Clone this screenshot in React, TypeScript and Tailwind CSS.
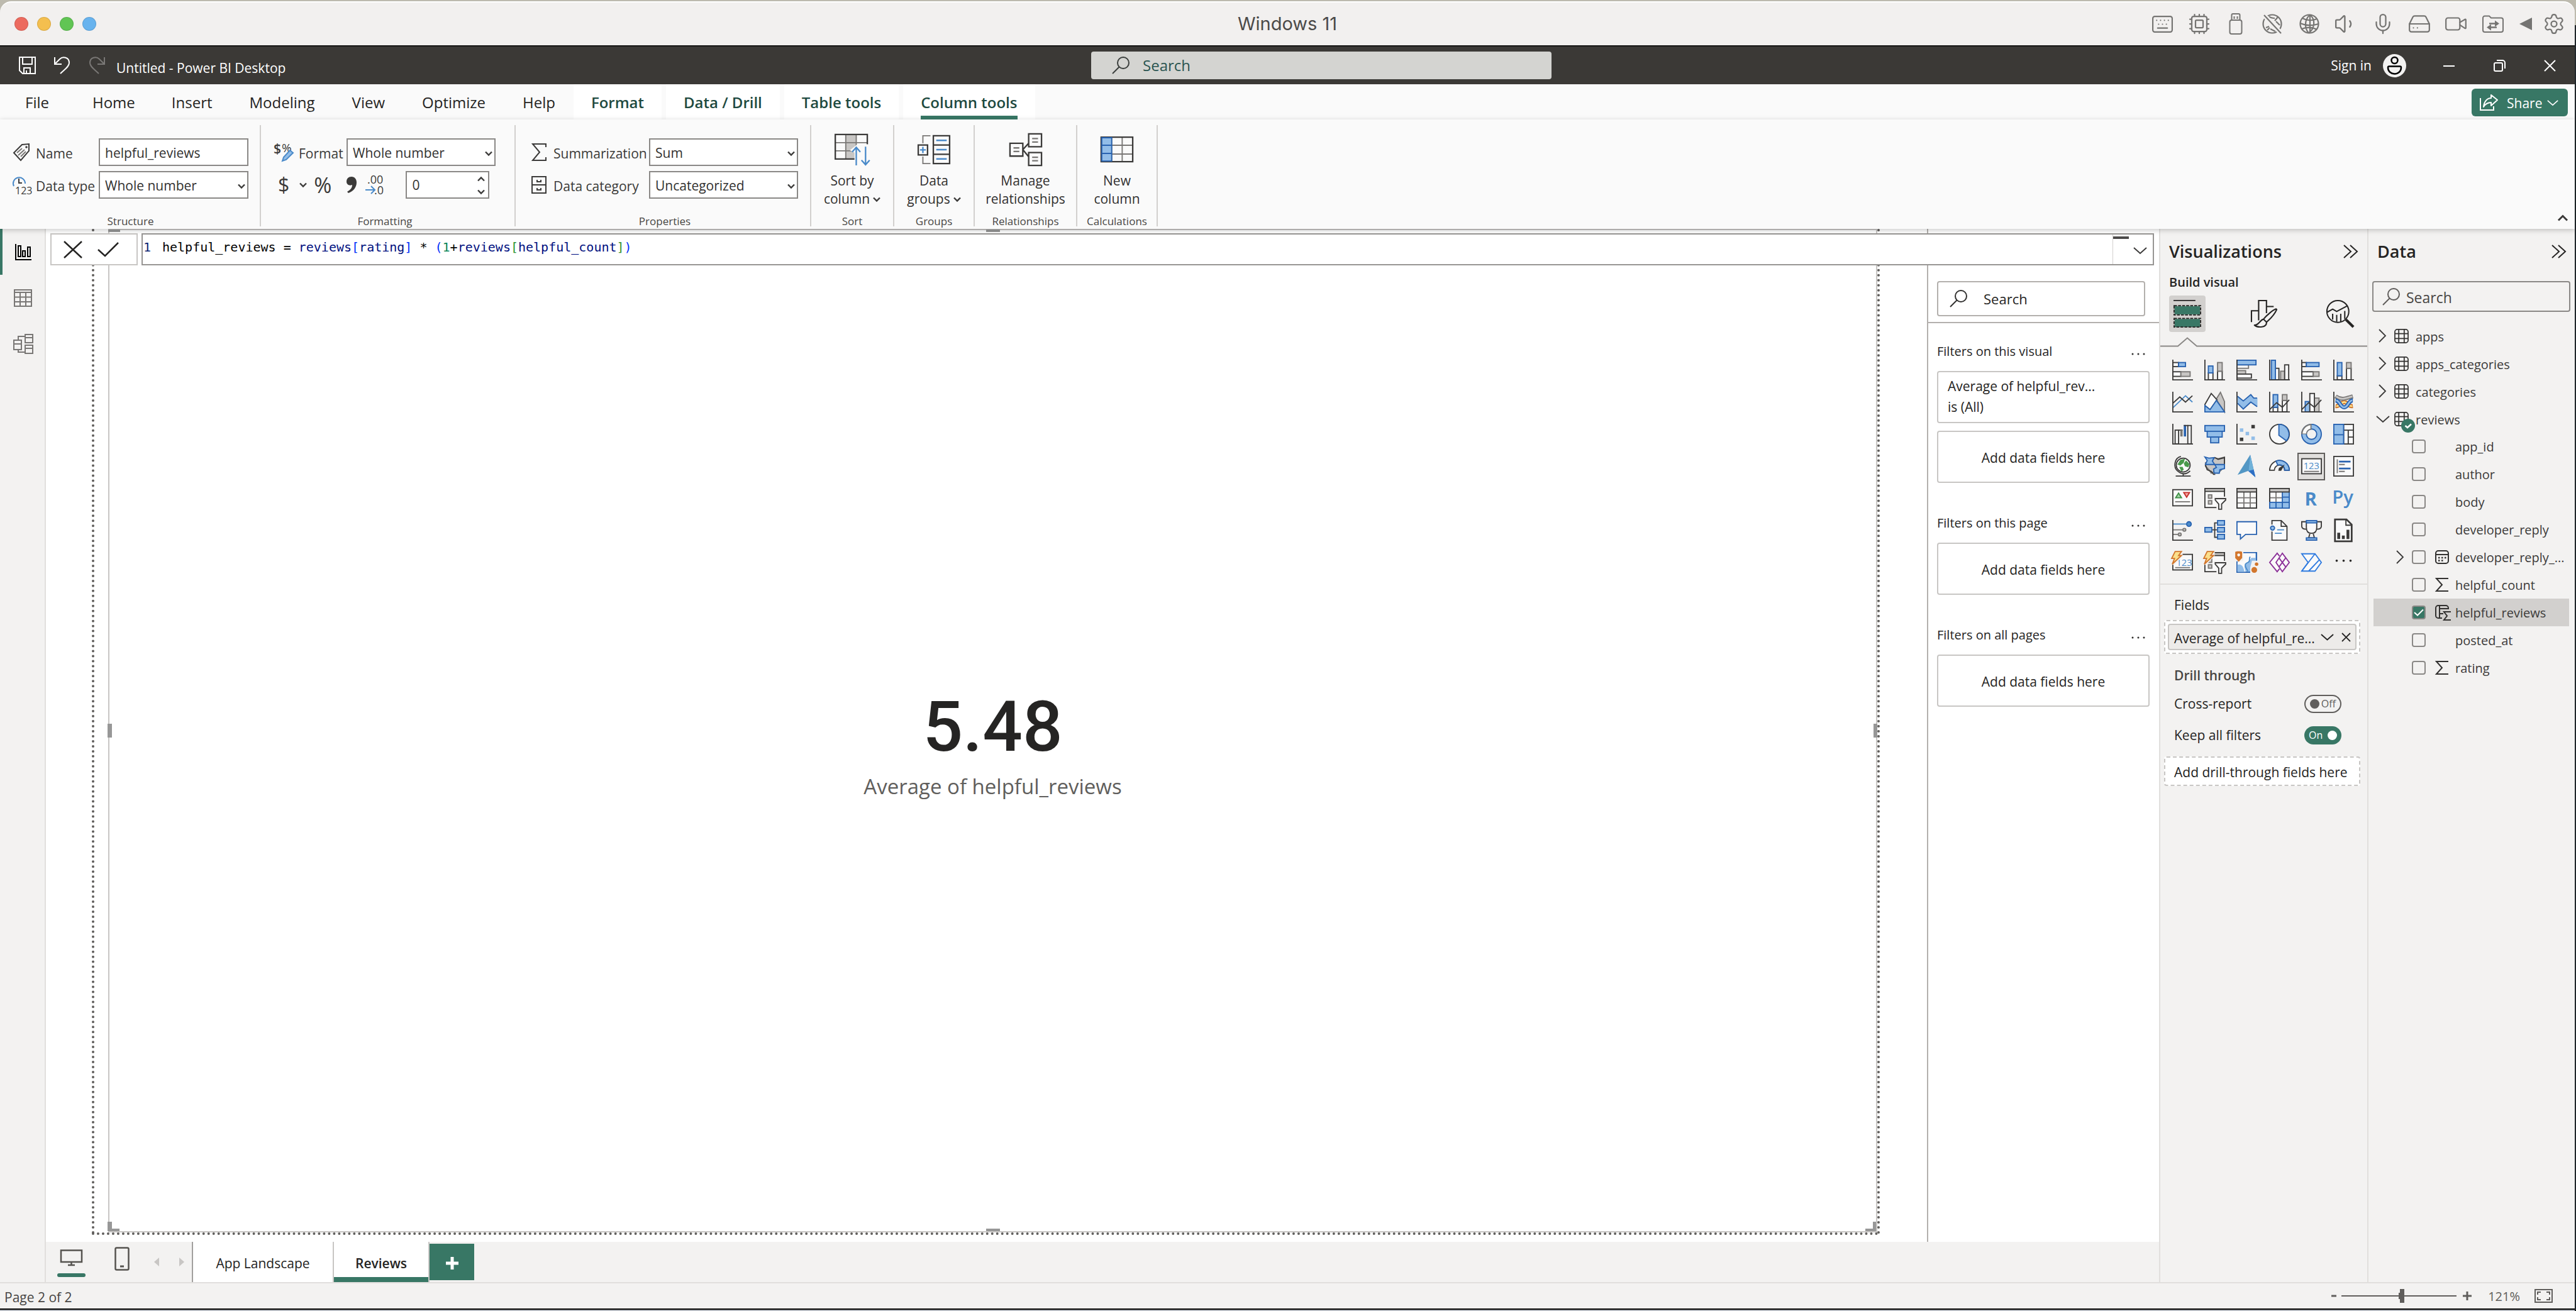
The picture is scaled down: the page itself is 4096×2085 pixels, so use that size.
import React from 'react';
import { Keyboard, Cpu, Volume1, Mic, HardDrive, Video, Settings } from 'lucide-react';

const D = '#3b3a39';
const G = '#797775';
const LG = '#c8c6c4';
const B = '#2862b0';
const LB = '#92bde8';
const W = '#fafafa';
const MB = '#4a8ac9';
const OR = '#d2762c';

type SvgProps = { w?: number; h?: number; vb?: string; className?: string; children: React.ReactNode };
const Svg = ({ w = 33, h = 33, vb = '0 0 36 36', className = '', children }: SvgProps) => (
  <svg width={w} height={h} viewBox={vb} fill="none" className={`shrink-0 overflow-visible ${className}`} aria-hidden="true">
    {children}
  </svg>
);

const ChevronDown = ({ w = 22, sw = 2, className = '' }: { w?: number; sw?: number; className?: string }) => (
  <Svg w={w} h={w / 2} vb="0 0 22 11" className={className}>
    <path d="M1 1L11 10L21 1" stroke="currentColor" strokeWidth={sw} />
  </Svg>
);
const ChevronRight = () => (
  <Svg w={12} h={22} vb="0 0 12 22">
    <path d="M1 1L11 11L1 21" stroke="currentColor" strokeWidth="1.800" />
  </Svg>
);
const Caret = ({ className = '' }: { className?: string }) => (
  <Svg w={12} h={8} vb="0 0 12 8" className={className}>
    <path d="M1 1.5L6 6.5L11 1.5" stroke={D} strokeWidth="2.4" />
  </Svg>
);
const DoubleChevron = () => (
  <Svg w={24} h={22} vb="0 0 24 22">
    <path d="M1 1L12 11L1 21M11 1L22 11L11 21" stroke="#252423" strokeWidth="2" />
  </Svg>
);
const SearchIcon = ({ color = '#323130' }: { color?: string }) => (
  <Svg w={28} h={28} vb="0 0 28 28">
    <circle cx="18" cy="10" r="9" stroke={color} strokeWidth="2" />
    <path d="M11.500 16.500L1 27" stroke={color} strokeWidth="2" />
  </Svg>
);

/* ---------- host window title bar ---------- */

const UsbStick = () => (
  <Svg w={22} h={34} vb="0 0 22 34">
    <rect x="1.500" y="11" width="19" height="22" rx="3" stroke="currentColor" strokeWidth="2" />
    <path d="M4.500 11V3a2 2 0 012-2h9a2 2 0 012 2v8M8.500 5v4M13.500 5v4" stroke="currentColor" strokeWidth="2" />
  </Svg>
);
const Globe = () => (
  <Svg w={32} h={32} vb="0 0 32 32">
    <g stroke="currentColor" strokeWidth="2.200">
      <circle cx="16" cy="16" r="14.500" />
      <path d="M17 1.500C8 9 8 23 15 30.500M17 1.500c9 7.500 8 21.500-2 29M17 1.500v29M1.500 15c9 4 20 4 29 1M5 7c7 4 16 4 23 1M4 24c7-3 17-3 24 1" />
    </g>
  </Svg>
);
const GlobeOff = () => (
  <Svg w={32} h={32} vb="0 0 32 32">
    <g stroke="currentColor" strokeWidth="2.200">
      <circle cx="16" cy="16" r="14.500" />
      <path d="M11 4c2 2 5 3 9 3M25 5l-5 6M21 28l-8-4M6 22l5-2M8 26l4-4M22 12l6 6" />
    </g>
    <path d="M2 1L30 31" stroke="#f2f0ef" strokeWidth="7" />
    <path d="M3 2L30 31" stroke="currentColor" strokeWidth="2.200" />
  </Svg>
);
const FolderArrows = () => (
  <Svg w={34} h={28} vb="0 0 34 28">
    <path d="M1 5a3 3 0 013-3.500h7l3 3h16a3 3 0 013 3V24a3 3 0 01-3 3H4a3 3 0 01-3-3Z" stroke="currentColor" strokeWidth="2" />
    <path d="M11 13.500h10M13 19.500h10" stroke="currentColor" strokeWidth="2.500" />
    <path d="M20 8.500l7 5-7 5ZM14 14.500l-7 5 7 5Z" fill="currentColor" />
  </Svg>
);

const hostIcons: [string, React.ReactNode][] = [
  ['Keyboard', <Keyboard size={37} strokeWidth={1.4} />],
  ['Processor', <Cpu size={36} strokeWidth={1.5} />],
  ['USB', <UsbStick />],
  ['Network off', <GlobeOff />],
  ['Network', <Globe />],
  ['Sound', <Volume1 size={38} strokeWidth={1.5} />],
  ['Microphone', <Mic size={36} strokeWidth={1.5} />],
  ['Hard disk', <HardDrive size={38} strokeWidth={1.4} />],
  ['Camera', <Video size={38} strokeWidth={1.4} />],
  ['Shared folders', <FolderArrows />],
];

function HostBar() {
  return (
    <header className="grid h-[70px] shrink-0 grid-cols-[1fr_auto_1fr] items-center rounded-t-[18px] border-t-2 border-white bg-[#f2f0ef]">
      <div className="flex items-center gap-[14px] pl-[23px]">
        {[['Close', 'bg-[#ec6b5f]'], ['Minimize', 'bg-[#f4bf4f]'], ['Zoom', 'bg-[#61c554]'], ['Coherence', 'bg-[#68b3ee]']].map(([n, c]) => (
          <button key={n} aria-label={n} className={`size-[22px] rounded-full border border-black/10 ${c}`} />
        ))}
      </div>
      <h1 className="font-[Inter,sans-serif] text-[29px] leading-8 text-[#4b4a49]">Windows 11</h1>
      <div className="flex items-center justify-end pr-[10px] text-[#757472]">
        <div className="flex w-[584px]">
          {hostIcons.map(([n, icon]) => (
            <button key={n} aria-label={n} className="flex flex-1 items-center justify-center">{icon}</button>
          ))}
        </div>
        <button aria-label="Collapse" className="flex w-[45px] justify-center">
          <Svg w={22} h={20} vb="0 0 22 20"><path d="M21 0V20L1 10Z" fill="currentColor" /></Svg>
        </button>
        <button aria-label="Settings" className="flex w-[46px] justify-center"><Settings size={36} strokeWidth={1.5} /></button>
      </div>
    </header>
  );
}

/* ---------- application title bar ---------- */

function AppBar() {
  return (
    <header className="grid h-[62px] shrink-0 grid-cols-[1735fr_732fr_1627fr] items-center border-t-2 border-[#161514] bg-[#3b3936] text-white">
      <div className="flex items-center pl-[30px]">
        <button aria-label="Save">
          <Svg w={27} h={28} vb="0 0 27 28">
            <path d="M1 1H26V27H6L1 22ZM6 1V12H21V1M8 27V18H18V27M12 27V22" stroke="white" strokeWidth="2" />
          </Svg>
        </button>
        <button aria-label="Undo" className="ml-[29px]">
          <Svg w={25} h={28} vb="0 0 25 28">
            <path d="M1 1V12H12M1 12L9 4C14 -1 24 1 24 10C24 16 17 20 10 27" stroke="white" strokeWidth="2" />
          </Svg>
        </button>
        <button aria-label="Redo" className="ml-[31px]">
          <Svg w={25} h={28} vb="0 0 25 28">
            <path d="M24 1V12H13M24 12L16 4C11 -1 1 1 1 10C1 16 8 20 15 27" stroke="#7a7876" strokeWidth="2" />
          </Svg>
        </button>
        <span className="ml-[18px] pt-[8px] text-[21px] leading-7">Untitled - Power BI Desktop</span>
      </div>
      <label className="flex h-[44px] items-center rounded-[4px] bg-[#d4d4d1] pl-[33px]">
        <SearchIcon color="#3b3f3d" />
        <input type="text" aria-label="Search" placeholder="Search" className="ml-[21px] min-w-0 flex-1 bg-transparent text-[24px] leading-8 outline-none placeholder:text-[#2a5450]" />
      </label>
      <div className="flex items-center justify-end">
        <button className="flex items-center gap-[18px] text-[21px] leading-7">
          Sign in
          <Svg w={37} h={37} vb="0 0 37 37">
            <circle cx="18.500" cy="18.500" r="18.500" fill="#f3f2f1" />
            <circle cx="18.500" cy="10" r="5" stroke="black" strokeWidth="2.500" />
            <path d="M10 19.500H27a2 2 0 012 2c0 6-5 10-10.500 10S8 27.500 8 21.500a2 2 0 012-2Z" stroke="black" strokeWidth="2.500" />
          </Svg>
        </button>
        <button aria-label="Minimize" className="ml-[28px] flex w-[80px] justify-center">
          <Svg w={18} h={18} vb="0 0 18 18"><path d="M0 10H18" stroke="white" strokeWidth="2" /></Svg>
        </button>
        <button aria-label="Restore" className="flex w-[80px] justify-center">
          <Svg w={19} h={19} vb="0 0 19 19">
            <rect x="1" y="5" width="13" height="13" rx="2" stroke="white" strokeWidth="2" />
            <path d="M5 1H14a4 4 0 014 4V14" stroke="white" strokeWidth="2" />
          </Svg>
        </button>
        <button aria-label="Close" className="flex w-[80px] justify-center">
          <Svg w={19} h={19} vb="0 0 19 19"><path d="M1 1L18 18M18 1L1 18" stroke="white" strokeWidth="2" /></Svg>
        </button>
      </div>
    </header>
  );
}

/* ---------- ribbon ---------- */

function RibbonTabs() {
  return (
    <nav className="flex h-[56px] shrink-0 items-stretch bg-[#fafafa] text-[24px] leading-8 text-[#252423]">
      <button className="pt-[2px] pr-[40px] pl-[40px]">File</button>
      {['Home', 'Insert'].map((t) => (
        <button key={t} className="px-[29px] pt-[2px]">{t}</button>
      ))}
      {['Modeling', 'View', 'Optimize', 'Help'].map((t) => (
        <button key={t} className="pt-[2px] pr-[29px] pl-[30px]">{t}</button>
      ))}
      <div className="flex gap-[7px] font-semibold text-[#1e4a40]">
        {['Format', 'Data / Drill', 'Table tools'].map((t) => (
          <button key={t} className="bg-white px-[28px] pt-[2px]">{t}</button>
        ))}
        <button aria-current="page" className="flex flex-col bg-white px-[28px]">
          <span className="flex flex-1 items-center pt-[8px]">Column tools</span>
          <span className="h-[6px] w-full bg-[#387765]" />
        </button>
      </div>
      <button className="mt-[7px] mr-[11px] ml-auto flex h-[44px] w-[153px] items-center rounded-[6px] bg-[#387765] pl-[13px] text-[21px] leading-7 text-white">
        <Svg w={29} h={26} vb="0 0 29 26">
          <path d="M1 6V25H22V19" stroke="white" strokeWidth="2" />
          <path d="M18 1L28 9L18 18V13C13 13 9 15 6 20C7 11 12 6 18 6Z" stroke="white" strokeWidth="2" strokeLinejoin="round" />
        </Svg>
        <span className="mr-[8px] ml-[14px] pt-[2px]">Share</span>
        <ChevronDown w={18} />
      </button>
    </nav>
  );
}

const Group = ({ label, className, children }: { label: string; className: string; children: React.ReactNode }) => (
  <section aria-label={label} className={`flex flex-col justify-between border-r-2 border-[#d2d0ce] ${className}`}>
    {children}
    <div className="text-center text-[17px] leading-4 text-[#484644]">{label}</div>
  </section>
);

const Picker = ({ id, value, className = 'w-[237px]' }: { id: string; value: string; className?: string }) => (
  <div className={`relative ${className}`}>
    <select id={id} defaultValue={value} className="h-[44px] w-full appearance-none border-2 border-[#8a8886] bg-white pt-[2px] pl-[8px] text-[21px] leading-7 text-[#323130] outline-none">
      <option>{value}</option>
    </select>
    <Caret className="pointer-events-none absolute top-[20px] right-[5px]" />
  </div>
);

const BigButton = ({ icon, lines, caret }: { icon: React.ReactNode; lines: string[]; caret?: boolean }) => (
  <button className="flex flex-col items-center pt-[12px] text-[21px] leading-[29px] text-[#323130]">
    <span className="flex h-[54px] items-center">{icon}</span>
    <span className="pt-[8px]">{lines[0]}</span>
    <span className="flex items-center gap-[5px]">
      {lines[1]}
      {caret && <Caret />}
    </span>
  </button>
);

function Ribbon() {
  return (
    <div className="relative z-20 flex h-[174px] shrink-0 bg-[#fafafa] pt-[9px] pb-[4px] text-[21px] leading-7 text-[#3b3a39] shadow-[0_2px_8px_rgba(0,0,0,0.22)]">
      <Group label="Structure" className="pr-[18px] pl-[20px]">
        <div className="flex flex-col gap-[8px] pt-[21px]">
          <div className="flex items-center">
            <Svg w={28} h={28} vb="0 0 28 28">
              <path d="M15 2L26 1V12L13 27L2 15Z" stroke={D} strokeWidth="2" />
              <circle cx="22" cy="6" r="1.800" fill={D} />
              <path d="M7 15L15 8M9 19L19 10M13 21L21 13" stroke={G} strokeWidth="2" />
            </Svg>
            <label htmlFor="col-name" className="ml-[9px] w-[100px] pt-[3px]">Name</label>
            <input id="col-name" type="text" defaultValue="helpful_reviews" className="h-[44px] w-[238px] border-2 border-[#8a8886] bg-white pt-[2px] pl-[8px] text-[#323130] outline-none" />
          </div>
          <div className="flex items-center">
            <Svg w={30} h={30} vb="0 0 30 30">
              <path d="M2 17A9.500 9.500 0 1120 13" stroke={MB} strokeWidth="2" />
              <path d="M10 5V12H15" stroke={D} strokeWidth="2" />
              <text x="4" y="30" fontSize="16" fill={D} fontFamily="Open Sans, sans-serif">123</text>
            </Svg>
            <label htmlFor="col-type" className="ml-[7px] w-[100px] pt-[3px]">Data type</label>
            <Picker id="col-type" value="Whole number" className="w-[238px]" />
          </div>
        </div>
      </Group>

      <Group label="Formatting" className="pr-[30px] pl-[21px]">
        <div className="flex flex-col gap-[8px] pt-[21px]">
          <div className="flex items-center">
            <Svg w={30} h={30} vb="0 0 30 30">
              <text x="-1" y="17" fontSize="21" fontWeight="600" fill={D} fontFamily="Open Sans, sans-serif">$</text>
              <text x="12" y="15" fontSize="19" fill={D} fontFamily="Open Sans, sans-serif">%</text>
              <path d="M13 29L15 23L25 12L30 16L19 27Z" fill={LB} stroke={MB} strokeWidth="2" />
            </Svg>
            <label htmlFor="col-format" className="ml-[9px] w-[76px] pt-[3px]">Format</label>
            <Picker id="col-format" value="Whole number" />
          </div>
          <div className="flex items-center pl-[6px]">
            <button aria-label="Currency" className="flex items-center gap-[16px]">
              <span className="text-[32px]">$</span>
              <Caret />
            </button>
            <button className="ml-[11px] text-[34px]">%</button>
            <button aria-label="Thousands separator" className="ml-[24px]">
              <Svg w={16} h={26} vb="0 0 16 26">
                <path d="M8 0C13 0 16 4 16 9C16 17 11 23 3 26L1 24C6 21 9 18 9 13C4 15 0 12 0 8C0 3 3 0 8 0Z" fill={D} />
              </Svg>
            </button>
            <button aria-label="Decimal places shortcut" className="ml-[14px]">
              <Svg w={28} h={30} vb="0 0 28 30">
                <text x="3" y="13" fontSize="18" fill={D} fontFamily="Open Sans, sans-serif">.00</text>
                <text x="14" y="30" fontSize="18" fill={D} fontFamily="Open Sans, sans-serif">.0</text>
                <path d="M0 23H14M9 17L15 23L9 29" stroke={MB} strokeWidth="2" />
              </Svg>
            </button>
            <div className="relative ml-[36px] w-[133px]">
              <input type="text" aria-label="Decimal places" defaultValue="0" className="h-[44px] w-full border-2 border-[#8a8886] bg-white pl-[8px] text-[#323130] outline-none" />
              <div className="pointer-events-none absolute top-[9px] right-[7px] flex flex-col gap-[12px]">
                <Caret className="rotate-180" />
                <Caret />
              </div>
            </div>
          </div>
        </div>
      </Group>

      <Group label="Properties" className="pr-[19px] pl-[25px]">
        <div className="flex flex-col gap-[8px] pt-[21px]">
          <div className="flex items-center">
            <Svg w={24} h={28} vb="0 0 24 28">
              <path d="M23 6V1H2L13 14L2 27H23V22" stroke={D} strokeWidth="2" />
            </Svg>
            <label htmlFor="col-sum" className="ml-[11px] w-[152px] pt-[3px]">Summarization</label>
            <Picker id="col-sum" value="Sum" />
          </div>
          <div className="flex items-center">
            <Svg w={24} h={28} vb="0 0 24 28">
              <path d="M1 1H23V27H1ZM1 14H23M9 6V9H15V6M9 19V22H15V19" stroke={D} strokeWidth="2" />
            </Svg>
            <label htmlFor="col-cat" className="ml-[11px] w-[152px] pt-[3px]">Data category</label>
            <Picker id="col-cat" value="Uncategorized" />
          </div>
        </div>
      </Group>

      <Group label="Sort" className="w-[132px]">
        <BigButton
          caret
          lines={['Sort by', 'column']}
          icon={
            <Svg w={56} h={50} vb="0 0 60 54">
              <rect x="19" y="1" width="18" height="42" fill={LG} />
              <path d="M1 15H56M1 29H56M19 1V43M37 1V43" stroke={G} strokeWidth="2" />
              <path d="M1 1H56V43H1Z" stroke={D} strokeWidth="2.500" />
              <path d="M26 28L40 17L64 18V58H34V32Z" fill="#fafafa" />
              <path d="M37 54V24M30 31L37 23L44 31M53 22V52M46 45L53 53L60 45" stroke={MB} strokeWidth="2.500" />
            </Svg>
          }
        />
      </Group>

      <Group label="Groups" className="w-[128px]">
        <BigButton
          caret
          lines={['Data', 'groups']}
          icon={
            <Svg w={52} h={48} vb="0 0 56 52">
              <path d="M22 2H9V15M22 50H9V38" stroke={G} strokeWidth="2" />
              <path d="M1 18H17V35H1ZM27 2H55V50H27ZM27 18H55M27 34H55" stroke={D} strokeWidth="2.500" />
              <path d="M4 26.500H14M9 21V32M32 10H50M32 26H50M32 42H50" stroke={MB} strokeWidth="2.500" />
            </Svg>
          }
        />
      </Group>

      <Group label="Relationships" className="w-[163px]">
        <BigButton
          lines={['Manage', 'relationships']}
          icon={
            <Svg w={52} h={52} vb="0 0 56 56">
              <path d="M1 17H23V39H1ZM33 1H55V23H33ZM33 33H55V55H33ZM23 28L33 17M23 28L33 40" stroke={D} strokeWidth="2.500" />
              <path d="M7 25H17M7 31H17M39 9H49M39 15H49M39 41H49M39 47H49" stroke={G} strokeWidth="2.500" />
            </Svg>
          }
        />
      </Group>

      <Group label="Calculations" className="w-[128px]">
        <BigButton
          lines={['New', 'column']}
          icon={
            <Svg w={52} h={42} vb="0 0 56 45">
              <path d="M1 15H55M1 30H55M19 1V43M37 1V43" stroke={G} strokeWidth="2" />
              <path d="M1 1H55V43H1Z" stroke={D} strokeWidth="2.500" />
              <path d="M2 2H19V42H2ZM2 15H19M2 29H19" fill={LB} stroke={B} strokeWidth="2" />
            </Svg>
          }
        />
      </Group>
      <button aria-label="Collapse ribbon" className="mr-[11px] ml-auto self-end pb-[8px]">
        <Svg w={16} h={11} vb="0 0 16 11"><path d="M1 9.500L8 2.500L15 9.500" stroke={D} strokeWidth="3" /></Svg>
      </button>
    </div>
  );
}

/* ---------- left rail ---------- */

function Rail() {
  return (
    <nav className="flex w-[73px] shrink-0 flex-col border-r-2 border-[#e1dfdd] bg-[#f3f2f1]">
      <button aria-label="Report view" className="flex h-[73px] items-center border-l-4 border-[#387765] pl-[20px]">
        <Svg w={26} h={26} vb="0 0 26 26">
          <path d="M1 0V25H26M5 20V3H9V20ZM12 20V11H16V20ZM20 20V5H24V20Z" stroke="black" strokeWidth="2" />
        </Svg>
      </button>
      <button aria-label="Table view" className="flex h-[73px] items-center pl-[22px]">
        <Svg w={29} h={28} vb="0 0 29 28">
          <path d="M1 1H28V27H1ZM1 5H28M1 12.500H28M1 20H28M10 5V27M19 5V27" stroke={G} strokeWidth="2" />
        </Svg>
      </button>
      <button aria-label="Model view" className="flex h-[73px] items-center pl-[21px]">
        <Svg w={32} h={32} vb="0 0 32 32">
          <path d="M1 10H13V25H1ZM1 16H13M19 1H31V14H19ZM19 6H31M19 18H31V31H19ZM19 23H31M8 10V4H19M8 25V29H19" stroke={G} strokeWidth="2" />
        </Svg>
      </button>
    </nav>
  );
}

/* ---------- report canvas ---------- */

const HG = 'absolute bg-[#979797]';

function Canvas() {
  return (
    <main className="flex min-w-0 flex-1 bg-white pr-[75px] pl-[73px] pb-[11px]">
      <div className="flex flex-1 border-x-4 border-b-4 border-dotted border-[#605e5c] pl-[22px]">
        <div className="relative flex flex-1 flex-col items-center justify-center border-2 border-[#c8c6c4] pt-[50px]">
          <div className="font-[Roboto,sans-serif] text-[112px] leading-[110px] font-medium text-[#252423]">5.48</div>
          <div className="pt-[18px] text-[33px] leading-[44px] text-[#605e5c]">Average of helpful_reviews</div>
          <span className={`${HG} -top-px -left-[2px] h-[4px] w-[19px]`} />
          <span className={`${HG} -top-px left-1/2 h-[4px] w-[22px] -translate-x-1/2`} />
          <span className={`${HG} bottom-0 left-1/2 h-[4px] w-[22px] -translate-x-1/2`} />
          <span className={`${HG} bottom-0 -left-[3px] h-[4px] w-[19px]`} />
          <span className={`${HG} bottom-0 -left-[3px] h-[15px] w-[7px]`} />
          <span className={`${HG} right-0 bottom-0 h-[4px] w-[17px]`} />
          <span className={`${HG} right-0 bottom-0 h-[15px] w-[5px]`} />
          <span className={`${HG} top-1/2 -left-[3px] h-[22px] w-[7px] -translate-y-1/2`} />
          <span className={`${HG} top-1/2 -right-[2px] h-[22px] w-[6px] -translate-y-1/2`} />
        </div>
      </div>
    </main>
  );
}

function FormulaBar() {
  return (
    <div className="absolute top-[7px] right-[8px] left-[7px] z-10 flex h-[51px] gap-[6px]">
      <div className="flex w-[139px] items-center border-2 border-[#c8c6c4] bg-white pl-[19px]">
        <button aria-label="Cancel">
          <Svg w={30} h={28} vb="0 0 30 28"><path d="M1 1L29 27M29 1L1 27" stroke="#252423" strokeWidth="2.500" /></Svg>
        </button>
        <button aria-label="Commit" className="ml-[24px]">
          <Svg w={34} h={24} vb="0 0 34 24"><path d="M1 12L12 22L33 1" stroke="#252423" strokeWidth="2.500" /></Svg>
        </button>
      </div>
      <div className="flex flex-1 border-2 border-[#979593] bg-white font-['DejaVu_Sans_Mono',monospace] text-[20px] leading-7">
        <span className="w-[31px] pt-[6px] pl-px text-[#0b216f]">1</span>
        <div role="textbox" aria-label="Formula" className="pt-[6px] whitespace-pre text-black">
          helpful_reviews = <span className="text-[#001080]">reviews</span><span className="text-[#0431fa]">[</span><span className="text-[#001080]">rating</span><span className="text-[#0431fa]">]</span> * <span className="text-[#0431fa]">(</span><span className="text-[#098658]">1</span>+<span className="text-[#001080]">reviews</span><span className="text-[#319331]">[</span><span className="text-[#001080]">helpful_count</span><span className="text-[#319331]">]</span><span className="text-[#0431fa]">)</span>
        </div>
        <div className="ml-auto w-[32px] border-l border-[#d2d0ce] pt-[3px]">
          <div className="h-[4px] w-[25px] bg-[#4b4a49]" />
        </div>
        <button aria-label="Expand formula bar" className="pt-[4px] pr-[9px] pl-px text-[#3b3a39]"><ChevronDown w={22} /></button>
      </div>
    </div>
  );
}

/* ---------- filters ---------- */

const Dots = () => (
  <Svg w={22} h={4} vb="0 0 22 4">
    <circle cx="2" cy="2" r="1.500" fill="#323130" /><circle cx="11" cy="2" r="1.500" fill="#323130" /><circle cx="20" cy="2" r="1.500" fill="#323130" />
  </Svg>
);

const FilterSection = ({ title, children }: { title: string; children?: React.ReactNode }) => (
  <section>
    <div className="flex h-[40px] items-center justify-between pr-[7px]">
      <h3 className="text-[20px] leading-7">{title}</h3>
      <button aria-label={`${title}, more options`} className="pt-[8px]"><Dots /></button>
    </div>
    <div className="mt-[11px] flex flex-col gap-[12px]">
      {children}
      <div className="flex h-[83px] items-center justify-center rounded-[4px] border-2 border-[#c8c6c4] pt-[2px]">Add data fields here</div>
    </div>
  </section>
);

function Filters() {
  return (
    <aside aria-label="Filters" className="w-[369px] shrink-0 border-l-2 border-[#b3b0ad] bg-white pt-[83px] text-[21px] leading-7 text-[#252423]">
      <div className="border-b-2 border-[#b3b0ad] pr-[22px] pb-[9px] pl-[14px]">
        <label className="flex h-[56px] items-center rounded-[4px] border-2 border-[#b3b0ad] pl-[18px]">
          <SearchIcon />
          <input type="text" aria-label="Search filters" placeholder="Search" className="ml-[26px] min-w-0 flex-1 text-[22px] leading-8 outline-none placeholder:text-[#252423]" />
        </label>
      </div>
      <div className="flex flex-col gap-[44px] pt-[25px] pr-[15px] pl-[14px]">
        <FilterSection title="Filters on this visual">
          <div className="h-[83px] rounded-[4px] border-2 border-[#c8c6c4] pt-[6px] pl-[15px]">
            <div className="leading-[33px]">Average of helpful_rev...</div>
            <div className="leading-[33px]">is (All)</div>
          </div>
        </FilterSection>
        <FilterSection title="Filters on this page" />
        <FilterSection title="Filters on all pages" />
      </div>
    </aside>
  );
}

/* ---------- page tabs ---------- */

function PageTabs() {
  return (
    <div className="flex h-[64px] shrink-0 items-stretch bg-[#f3f2f1] text-[21px] leading-7 text-[#252423]">
      <button aria-label="Desktop layout" className="ml-[18px] flex w-[45px] flex-col items-center justify-between pt-[12px] pb-[8px]">
        <Svg w={35} h={26} vb="0 0 35 26">
          <path d="M1 1.500H34V20H1ZM17.500 20V25M12 25H23" stroke="#55534f" strokeWidth="2.500" />
        </Svg>
        <span className="h-[6px] w-full rounded-full bg-[#387765]" />
      </button>
      <button aria-label="Mobile layout" className="ml-[46px] pb-[10px]">
        <Svg w={24} h={38} vb="0 0 24 38">
          <rect x="1.500" y="1.500" width="21" height="35" rx="2" stroke="#55534f" strokeWidth="2.500" />
          <path d="M9 31H15" stroke="#55534f" strokeWidth="3" />
        </Svg>
      </button>
      <button aria-label="Previous page" className="ml-[39px]">
        <Svg w={8} h={14} vb="0 0 8 14"><path d="M8 0V14L0 7Z" fill="#c8c6c4" /></Svg>
      </button>
      <button aria-label="Next page" className="ml-[32px]">
        <Svg w={8} h={14} vb="0 0 8 14"><path d="M0 0V14L8 7Z" fill="#c8c6c4" /></Svg>
      </button>
      <button className="ml-[12px] w-[224px] border-l-2 border-[#a19f9d] bg-white pt-[4px]">App Landscape</button>
      <button aria-current="page" className="flex w-[154px] flex-col items-center border-x-2 border-[#c8c6c4] bg-white font-semibold">
        <span className="flex flex-1 items-center pt-[12px]">Reviews</span>
        <span className="h-[8px] w-full bg-[#387765]" />
      </button>
      <button aria-label="New page" className="my-[3px] flex w-[71px] items-center justify-center bg-[#387765] pt-[4px]">
        <Svg w={20} h={20} vb="0 0 20 20"><path d="M10 0V20M0 10H20" stroke="white" strokeWidth="5" /></Svg>
      </button>
    </div>
  );
}

/* ---------- visualizations ---------- */

const Axis = () => <path d="M1 0V35H36" stroke={D} strokeWidth="2" />;
const R = ({ x, y, x2, y2, f = W, s = D }: { x: number; y: number; x2: number; y2: number; f?: string; s?: string }) => (
  <rect x={x} y={y} width={x2 - x} height={y2 - y} fill={f} stroke={s} strokeWidth="2" />
);
const P = ({ d, f = 'none', s = D, sw = 2 }: { d: string; f?: string; s?: string; sw?: number }) => (
  <path d={d} fill={f} stroke={s} strokeWidth={sw} />
);
const T = ({ x, y, size, w = 400, children }: { x: number; y: number; size: number; w?: number; children: string }) => (
  <text x={x} y={y} fontSize={size} fontWeight={w} fill={MB} fontFamily="Open Sans, sans-serif">{children}</text>
);
const Bolt = () => <P d="M5 -1H16L11 6H16L0 21L4 11H-1Z" f="#fbdf8b" s={OR} />;
const Slicer = () => (
  <>
    <R x={1} y={1} x2={35} y2={34} />
    <R x={1} y={1} x2={35} y2={6} f={LG} />
    <R x={7} y={12} x2={13} y2={18} f={LG} s={G} />
    <R x={7} y={22} x2={13} y2={28} f={LG} s={G} />
  </>
);
const Funnel = () => (
  <>
    <path d="M16 15H40V40H21V26L16 20Z" fill="#f3f2f1" />
    <P d="M19 18.500H37V21L30 28V37H25V28L19 21Z" f={W} />
  </>
);

const visuals: [string, React.ReactNode][] = [
  ['Stacked bar chart', <><R x={1} y={5} x2={11} y2={12} /><R x={11} y={5} x2={23} y2={12} f={LB} s={B} /><R x={1} y={21} x2={15} y2={29} /><R x={15} y={21} x2={31} y2={29} f={LG} s={G} /><Axis /></>],
  ['Stacked column chart', <><R x={7} y={23} x2={15} y2={35} /><R x={7} y={11} x2={15} y2={23} f={LB} s={B} /><R x={23} y={20} x2={31} y2={35} /><R x={23} y={5} x2={31} y2={20} f={LG} s={G} /><Axis /></>],
  ['Clustered bar chart', <><R x={1} y={9} x2={21} y2={15} s={G} /><R x={1} y={19} x2={16} y2={25} f={LG} s={G} /><R x={1} y={25} x2={26} y2={32} /><R x={1} y={1} x2={34} y2={9} f={LB} s={B} /><Axis /></>],
  ['Clustered column chart', <><R x={11} y={15} x2={17} y2={35} /><R x={20} y={20} x2={27} y2={35} f={LG} s={G} /><R x={27} y={9} x2={34} y2={35} /><R x={4} y={1} x2={11} y2={35} f={LB} s={B} /><Axis /></>],
  ['100% stacked bar chart', <><R x={1} y={5} x2={9} y2={12} /><R x={9} y={5} x2={31} y2={12} f={LB} s={B} /><R x={1} y={21} x2={21} y2={29} /><R x={21} y={21} x2={31} y2={29} f={LG} s={G} /><Axis /></>],
  ['100% stacked column chart', <><R x={7} y={28} x2={15} y2={35} /><R x={7} y={5} x2={15} y2={28} f={LB} s={B} /><R x={23} y={15} x2={31} y2={35} /><R x={23} y={5} x2={31} y2={15} f={LG} s={G} /><Axis /></>],

  ['Line chart', <><P d="M1 28L23 7L35 18" s={MB} /><P d="M1 20L13 9L23 18L35 7" /><Axis /></>],
  ['Area chart', <><P d="M20 14L28 1L35 17V35L21 14" f={LG} s={G} /><P d="M1 22L12 3L22 14L10 31L1 24Z" f={W} /><P d="M1 24L10 31L21 15L35 35H1Z" f={LB} s={B} /></>],
  ['Stacked area chart', <><P d="M2 8L12 16L25 5L30 11H36V26L25 18L12 30L2 20Z" f={LB} s={LB} sw={1} /><P d="M2 8L12 16L25 5L30 11H36M2 20L12 30L25 18L36 26" s={B} /><Axis /></>],
  ['Line and stacked column chart', <><R x={7} y={27} x2={15} y2={35} /><R x={7} y={5} x2={15} y2={27} f={LB} s={B} /><R x={23} y={15} x2={31} y2={35} /><R x={23} y={5} x2={31} y2={15} f={LG} s={G} /><P d="M1 31L13 19L23 27L35 14" /><Axis /></>],
  ['Line and clustered column chart', <><R x={23} y={11} x2={31} y2={35} f={LG} s={G} /><R x={7} y={17} x2={15} y2={35} f={LB} s={B} /><R x={15} y={3} x2={23} y2={35} /><P d="M1 31L13 19L23 27L35 14" /><Axis /></>],
  ['Ribbon chart', <><P d="M4 25C12 26 14 17 20 18S26 26 34 25" s={OR} sw={7} /><P d="M5 25C12 26 14 17 20 18S26 26 33 25" s="#fbdf8b" sw={3} /><P d="M4 8C14 15 20 12 34 8" s={G} sw={7} /><P d="M5 8C14 15 20 12 33 8" s={LG} sw={3} /><P d="M4 15C12 16 12 27 19 27S26 15 34 15" s={B} sw={7} /><P d="M5 15C12 16 12 27 19 27S26 15 33 15" s={LB} sw={3} /><Axis /></>],

  ['Waterfall chart', <><R x={5} y={11} x2={11} y2={35} /><path d="M11 11H18" stroke={D} strokeWidth="2" /><rect x="14" y="11" width="4" height="11" fill={G} /><rect x="20" y="2" width="4" height="20" fill={B} /><path d="M20 3H28" stroke={D} strokeWidth="2" /><R x={27} y={3} x2={33} y2={35} /><Axis /></>],
  ['Funnel', <><R x={1} y={3} x2={35} y2={13} f={LB} s={B} /><R x={5} y={13} x2={31} y2={23} f={LB} s={B} /><R x={11} y={23} x2={25} y2={33} f={LB} s={B} /></>],
  ['Scatter chart', <><path d="M6 8h6v6h-6ZM16 14h6v6h-6ZM26 22h6v6h-6Z" fill={LB} /><path d="M26 2h6v6h-6ZM6 24h6v6h-6Z" fill={D} /><Axis /></>],
  ['Pie chart', <><circle cx="18" cy="18" r="17" fill={W} stroke={D} strokeWidth="2" /><P d="M17 1A17 17 0 0130 29.500L17 20Z" f={LB} s={B} /></>],
  ['Donut chart', <><circle cx="18" cy="18" r="13" stroke={B} strokeWidth="10" /><circle cx="18" cy="18" r="13" stroke={LB} strokeWidth="6" /><path d="M0 18A18 18 0 0118 0V10A8 8 0 0010 18Z" fill={G} /><path d="M2.500 17A15.500 15.500 0 0116 2.500V8.500A9 9 0 008.500 17Z" fill={W} /></>],
  ['Treemap', <><R x={18} y={1} x2={35} y2={35} /><P d="M18 11H35M26 11V35M26 23H35" /><R x={1} y={1} x2={18} y2={35} f={LB} s={B} /><P d="M1 19H18" s={B} /></>],

  ['Map', <><circle cx="19" cy="16" r="12" fill={W} stroke={D} strokeWidth="2" /><path d="M14 7L22 5L20 12L14 17L9 15ZM24 8L30 14L28 20L22 18L20 13ZM12 19L18 19L20 24L16 27Z" fill="#4a9a4c" /><P d="M15 1C3 4 2 20 9 26S24 33 31 26M19 31V35M6 35H32" /></>],
  ['Filled map', <><P d="M18 3L24 5L35 2V16L30 24L24 30L18 27L12 30L8 24L2 18L2 12L12 10Z" f={LG} s={G} /><P d="M1 2L8 4L17 3L14 9L18 15L2 15L5 8Z" f={LB} s={B} /><P d="M18 15L35 15L35 22L27 24L26 30L17 30L16 23L21 20Z" f={LB} s={B} /><P d="M2 16L5 24L12 27L16 32H19M18 3L24 6L35 3V14" /></>],
  ['Azure map', <><path d="M24 -2L33 37L18 24Z" fill="#2e6fc4" /><path d="M24 -2L2 33L21 26Z" fill="#5397c4" /><path d="M24 -2L33 37L21 26Z" fill="#6fb1d8" /><path d="M21 26L33 37L30 24Z" fill="#2e6fc4" /></>],
  ['Gauge', <><P d="M1 25A17 17 0 0135 25H27A9 9 0 009 25Z" f={W} /><P d="M12 9A17 17 0 0135 25H27A9 9 0 0015 16Z" f={LB} s={B} /><path d="M27 15L21 26H16L17 21Z" fill={D} /></>],
  ['Card', <><R x={1} y={5} x2={35} y2={31} /><T x={4} y={23} size={16}>123</T><P d="M5 27H31" s={G} /></>],
  ['Multi-row card', <><R x={1} y={1} x2={35} y2={35} /><P d="M7 6V30M10 15H20M10 27H20" s={G} /><P d="M10 10H30M10 22H30" s={B} sw={3} /></>],

  ['KPI', <><R x={1} y={3} x2={35} y2={31} /><P d="M6 17L11 9L16 17Z" f="#a5d6a7" s="#3f8f46" /><P d="M20 8H30L25 16Z" f="#f6a9a4" s="#c5302c" /><P d="M5 24H31" s={G} /></>],
  ['Slicer', <><Slicer /><Funnel /></>],
  ['Table', <><R x={1} y={1} x2={35} y2={35} /><P d="M1 17H35M1 26H35M13 7V35M24 7V35" s={G} /><P d="M1 1H35V35H1Z" /><R x={1} y={1} x2={35} y2={7} f={LG} /></>],
  ['Matrix', <><R x={1} y={1} x2={35} y2={35} /><path d="M23 7H35V35H1V25H23Z" fill={LB} /><P d="M1 17H23M12 7V24" s={G} /><P d="M23 7V35M1 25H35M23 16H35M12 25V35" s={B} /><P d="M1 1V25M35 1V7" /><P d="M1 24V35H35V7" s={B} /><R x={1} y={1} x2={35} y2={7} f={LG} /></>],
  ['R script visual', <T x={6} y={30} size={32} w={700}>R</T>],
  ['Python visual', <T x={-2} y={27} size={32} w={600}>Py</T>],

  ['Key influencers', <><P d="M1 7H25" s={MB} /><P d="M1 17H18M1 25H10" s={G} /><circle cx="29" cy="7" r="4" fill={MB} stroke={B} strokeWidth="2" /><circle cx="21" cy="17" r="2.500" fill={LG} stroke={G} strokeWidth="2" /><circle cx="13" cy="25" r="2.500" fill={LG} stroke={G} strokeWidth="2" /><Axis /></>],
  ['Decomposition tree', <><P d="M13 17H22M23 5H18V30H23" /><R x={1} y={13} x2={13} y2={21} f={LB} s={B} /><R x={23} y={1} x2={35} y2={9} f={LB} s={B} /><R x={23} y={13} x2={35} y2={21} f={LB} s={B} /><R x={23} y={25} x2={35} y2={33} f={LB} s={B} /></>],
  ['Q&A', <P d="M1 3H35V25H16L7 33V25H1Z" f={W} s={B} />],
  ['Narrative', <><path d="M5 1H21L31 11V35H5Z" fill={W} /><P d="M5 8V1H21L31 11V35H5V20M21 1V11H31" /><P d="M14 17H26M10 23H22" s={MB} /><circle cx="6" cy="14" r="3.500" fill={LB} stroke={B} strokeWidth="2" /></>],
  ['Metrics', <><P d="M9 3H1V11C1 15 4 16 9 16M27 3H35V11C35 15 32 16 27 16" /><P d="M9 4V13C9 20 13 23 18 23S27 20 27 13V4Z" f={W} /><P d="M15 24L13 31H23L21 24" /><R x={9} y={1} x2={27} y2={5} f={LB} s={B} /><R x={9} y={31} x2={27} y2={35} f={LB} s={B} /></>],
  ['Paginated report', <><P d="M3 -1H23L32 8V37H3Z" sw={3} f={W} /><P d="M22 0V9H32" /><path d="M7 22h5v11h-5ZM15 27h5v6h-5ZM23 17h5v16h-5Z" fill={D} /></>],

  ['Card (new)', <><R x={1} y={4} x2={35} y2={31} /><T x={7} y={24} size={16}>123</T><P d="M5 27H31" s={G} /><path d="M-2 -2H18V8L4 22H-2Z" fill="#f3f2f1" /><Bolt /></>],
  ['Slicer (new)', <><Slicer /><path d="M-2 -2H18V6L4 22H-2Z" fill="#f3f2f1" /><Bolt /><Funnel /></>],
  ['ArcGIS map', <><R x={1} y={1} x2={35} y2={35} f={LB} s={B} /><path d="M2 18L12 2H33V10L26 10L22 16L15 20L14 26L16 34H2Z" fill={W} /><path d="M2 22C10 20 12 26 14 34H2Z" fill={LB} /><path d="M24 8C20 12 26 16 20 18S14 24 20 33" stroke={MB} strokeWidth="2" /><path d="M-4 -4H12V16H-4ZM27 15H40V40H24V27Z" fill="#f3f2f1" /><path d="M-2 0C-2 -2 10 -2 10 0V10L4 17L-2 10Z" fill={OR} /><circle cx="4" cy="5" r="2.500" fill={W} /><circle cx="35" cy="21" r="3" fill={OR} /><circle cx="31" cy="31" r="5" fill={OR} /></>],
  ['Power Apps', <><P d="M15 2H24L35 18L24 34H15L1 18Z" f={W} s={W} sw={1} /><P d="M18 7L14 2L1 18L14 34L18 29" s="#8b2f97" /><P d="M23 2L35 18L23 34L12 18ZM17 10L29 26M29 10L17 26" s="#8b2f97" /></>],
  ['Power Automate', <><P d="M1 3H24L35 18L24 33H1L12 18Z" f={W} s="#2f7be0" /><P d="M24 3L1 33M32 13L13 33" s="#2f7be0" /></>],
  ['More visuals', <><circle cx="6" cy="15" r="2" fill="#252423" /><circle cx="18" cy="15" r="2" fill="#252423" /><circle cx="30" cy="15" r="2" fill="#252423" /></>],
];

const Switch = ({ label, on }: { label: string; on: boolean }) => (
  <label className="flex h-[50px] items-center justify-between pr-[30px]">
    <span>{label}</span>
    <input type="checkbox" role="switch" defaultChecked={on} className="sr-only" />
    {on ? (
      <span className="flex h-[29px] w-[59px] items-center justify-between rounded-full bg-[#387765] px-[7px] text-[16px] leading-5 text-white">
        On
        <span className="size-[15px] rounded-full bg-white" />
      </span>
    ) : (
      <span className="flex h-[29px] w-[59px] items-center justify-between rounded-full border-2 border-[#605e5c] px-[7px] text-[16px] leading-5 text-[#605e5c]">
        <span className="size-[15px] rounded-full bg-[#605e5c]" />
        Off
      </span>
    )}
  </label>
);

function Visualizations() {
  return (
    <aside aria-label="Visualizations" className="w-[331px] shrink-0 border-l-2 border-[#e1dfdd] bg-[#f3f2f1] pt-[18px] text-[21px] leading-7 text-[#252423]">
      <div className="flex h-[36px] items-center justify-between pr-[14px] pl-[14px]">
        <h2 className="text-[27px] leading-9 font-semibold">Visualizations</h2>
        <button aria-label="Collapse Visualizations"><DoubleChevron /></button>
      </div>
      <h3 className="pt-[15px] pl-[14px] text-[20px] leading-8 font-semibold">Build visual</h3>
      <div className="flex items-center justify-between pt-[5px] pr-[14px] pl-[14px]">
        <button aria-label="Build visual" className="flex size-[58px] items-center justify-center rounded-[4px] bg-[#d2d0ce]">
          <Svg w={44} h={44} vb="0 0 48 48">
            <path d="M0 1H38" stroke="#252423" strokeWidth="2" />
            <rect x="2" y="11" width="44" height="14" fill="#387765" />
            <rect x="2" y="33" width="44" height="14" fill="#387765" />
            <rect x="1" y="10" width="46" height="16" stroke="#252423" strokeWidth="2" strokeDasharray="5 2" />
            <rect x="1" y="32" width="46" height="15" stroke="#252423" strokeWidth="2" strokeDasharray="5 2" />
          </Svg>
        </button>
        <button aria-label="Format visual" className="flex size-[58px] items-center justify-center">
          <Svg w={42} h={44} vb="0 0 44 46">
            <path d="M1 37V18H13M13 34V1H26V22M26 11H38" stroke="#252423" strokeWidth="2.200" />
            <path d="M42 15C36 17 25 27 21 32L26 37C33 31 40 23 43 16ZM21 32C15 33 14 42 6 42C12 47 27 46 26 37" fill="#f3f2f1" stroke="#252423" strokeWidth="2.200" strokeLinejoin="round" />
          </Svg>
        </button>
        <button aria-label="Analytics" className="flex size-[58px] items-center justify-center">
          <Svg w={44} h={44} vb="0 0 48 48">
            <circle cx="20" cy="20" r="19" stroke="#252423" strokeWidth="2.200" />
            <path d="M2 21L11 16L18 20L37 10" stroke="#252423" strokeWidth="2.200" />
            <path d="M11 24V34M18 26V38M25 24V38M32 19V33" stroke="#252423" strokeWidth="2.200" />
            <path d="M34 34L47 47" stroke="#252423" strokeWidth="4.500" />
          </Svg>
        </button>
      </div>
      <svg className="mt-[8px] block h-[16px] w-full" fill="none" aria-hidden="true">
        <path d="M0 14.500H28L43 1.500L58 14.500H400" stroke="#8a8886" strokeWidth="2" />
      </svg>
      <div className="mt-[11px] grid w-[317px] grid-cols-6 pl-[10px]">
        {visuals.map(([name, icon]) => (
          <button
            key={name}
            aria-label={name}
            aria-pressed={name === 'Card'}
            className="group flex h-[51px] items-center justify-center"
          >
            <span className="flex size-[44px] items-center justify-center group-aria-pressed:border-2 group-aria-pressed:border-[#605e5c] group-aria-pressed:bg-[#e1dfdd]">
              <Svg>{icon}</Svg>
            </span>
          </button>
        ))}
      </div>
      <div className="mt-[8px] border-t-2 border-[#e1dfdd] pr-[11px] pl-[6px]">
        <div className="flex h-[56px] items-center pt-[7px] pl-[16px]">Fields</div>
        <div className="rounded-[4px] border-2 border-dashed border-[#c8c6c4] bg-white p-[4px]">
          <div className="flex h-[42px] items-center rounded-[4px] border-2 border-[#c8c6c4] bg-[#edebe9] pl-[8px]">
            <span className="pt-[3px]">Average of helpful_re...</span>
            <button aria-label="Field options" className="mr-[12px] ml-auto"><ChevronDown w={21} /></button>
            <button aria-label="Remove field" className="mr-[7px]">
              <Svg w={15} h={15} vb="0 0 15 15"><path d="M1 1L14 14M14 1L1 14" stroke="#252423" strokeWidth="1.800" /></Svg>
            </button>
          </div>
        </div>
        <div className="pl-[16px]">
          <h3 className="pt-[20px] leading-7 font-semibold text-[#484644]">Drill through</h3>
          <div className="pt-[6px]">
            <Switch label="Cross-report" on={false} />
            <Switch label="Keep all filters" on />
          </div>
        </div>
        <div className="mt-[9px] flex h-[47px] items-center rounded-[4px] border-2 border-dashed border-[#c8c6c4] bg-white pt-[2px] pl-[14px] whitespace-nowrap">Add drill-through fields here</div>
      </div>
    </aside>
  );
}

/* ---------- data pane ---------- */

const TableIcon = () => (
  <Svg w={23} h={23} vb="0 0 24 24">
    <rect x="1" y="1" width="22" height="22" rx="4" stroke="#323130" strokeWidth="1.800" />
    <path d="M1 8H23M1 16H23M7.500 1V23M16.500 1V23" stroke="#323130" strokeWidth="1.800" />
  </Svg>
);
const Sigma = () => (
  <Svg w={22} h={22} vb="0 0 22 22"><path d="M21 1H2L11 11L2 21H21" stroke="#323130" strokeWidth="2" /></Svg>
);
const CalendarIcon = () => (
  <Svg w={22} h={22} vb="0 0 22 22">
    <rect x="1" y="1" width="20" height="20" rx="4" stroke="#323130" strokeWidth="2" />
    <path d="M1 7H21" stroke="#323130" strokeWidth="2" />
    <path d="M5 12h2.500M10 12h2.500M15 12h2.500M5 16.500h2.500M10 16.500h2.500" stroke="#323130" strokeWidth="2.500" />
  </Svg>
);
const CalcColumn = () => (
  <Svg w={25} h={25} vb="0 0 25 25">
    <path d="M21 7V5a4 4 0 00-4-4H5A4 4 0 001 5V17a4 4 0 004 4H11M7 1V21M7 6H21M7 14H13" stroke="#323130" strokeWidth="2" />
    <path d="M25 11H14L19 17.500L14 24H25" stroke="#323130" strokeWidth="2" />
  </Svg>
);

const tables = ['apps', 'apps_categories', 'categories'];
const fields: { name: string; icon?: React.ReactNode; expand?: boolean; on?: boolean }[] = [
  { name: 'app_id' },
  { name: 'author' },
  { name: 'body' },
  { name: 'developer_reply' },
  { name: 'developer_reply_...', icon: <CalendarIcon />, expand: true },
  { name: 'helpful_count', icon: <Sigma /> },
  { name: 'helpful_reviews', icon: <CalcColumn />, on: true },
  { name: 'posted_at' },
  { name: 'rating', icon: <Sigma /> },
];

function DataPane() {
  return (
    <aside aria-label="Data" className="w-[330px] shrink-0 border-l-2 border-[#e1dfdd] bg-[#f3f2f1] pt-[18px] text-[20px] leading-7 text-[#3b3a39]">
      <div className="flex h-[36px] items-center justify-between pr-[13px] pl-[14px] text-[#252423]">
        <h2 className="text-[27px] leading-9 font-semibold">Data</h2>
        <button aria-label="Collapse Data"><DoubleChevron /></button>
      </div>
      <label className="mt-[29px] mr-[7px] ml-[6px] flex h-[49px] items-center rounded-[4px] border-2 border-[#8a8886] pl-[14px]">
        <SearchIcon color="#605e5c" />
        <input type="text" aria-label="Search data" placeholder="Search" className="ml-[10px] min-w-0 flex-1 bg-transparent pt-[2px] text-[23px] leading-8 outline-none placeholder:text-[#484644]" />
      </label>
      <ul className="mt-[16px] mr-[9px] ml-[8px]">
        {tables.map((t) => (
          <li key={t} className="flex h-[44px] items-center pl-[8px]">
            <button aria-label={`Expand ${t}`} className="mr-[13px]"><ChevronRight /></button>
            <TableIcon />
            <span className="ml-[11px] pt-[3px]">{t}</span>
          </li>
        ))}
        <li>
          <div className="flex h-[44px] items-center pl-[4px]">
            <button aria-label="Collapse reviews" className="mr-[7px]"><ChevronDown w={22} sw={1.8} /></button>
            <span className="relative">
              <TableIcon />
              <Svg w={22} h={22} vb="0 0 22 22" className="absolute top-[11px] left-[11px]">
                <circle cx="11" cy="11" r="11" fill="#387765" />
                <path d="M6.500 11L10 14L16 8.500" stroke="white" strokeWidth="2.500" />
              </Svg>
            </span>
            <span className="ml-[11px] pt-[3px]">reviews</span>
          </div>
          <ul>
            {fields.map((f) => (
              <li key={f.name} className={`flex h-[44px] items-center ${f.on ? 'bg-[#d2d0ce]' : ''}`}>
                <span className="flex w-[61px] items-center pl-[36px]">
                  {f.expand && <button aria-label={`Expand ${f.name}`}><ChevronRight /></button>}
                </span>
                <label className="flex items-center">
                  <span className="relative flex size-[22px]">
                    <input type="checkbox" defaultChecked={f.on} className="size-[22px] appearance-none rounded-[4px] border-2 border-[#8a8886] checked:bg-[#387765]" />
                    {f.on && (
                      <Svg w={18} h={18} vb="0 0 18 18" className="pointer-events-none absolute top-[2px] left-[2px]">
                        <path d="M2 9L7 13.500L16 4.500" stroke="white" strokeWidth="2" />
                      </Svg>
                    )}
                  </span>
                  <span className="flex w-[47px] pl-[15px]">{f.icon}</span>
                  <span className="pt-[2px] whitespace-nowrap">{f.name}</span>
                </label>
              </li>
            ))}
          </ul>
        </li>
      </ul>
    </aside>
  );
}

/* ---------- status bar ---------- */

function StatusBar() {
  return (
    <footer className="flex h-[42px] shrink-0 items-center border-t-2 border-[#e1dfdd] bg-[#f3f2f1] pr-[35px] pl-[7px] text-[21px] leading-7 text-[#484644]">
      <span className="pt-[3px]">Page 2 of 2</span>
      <button aria-label="Zoom out" className="ml-auto">
        <Svg w={8} h={14} vb="0 0 8 14"><path d="M0 7H8" stroke="#605e5c" strokeWidth="3" /></Svg>
      </button>
      <div className="relative ml-[8px] flex h-[22px] w-[183px] items-center">
        <input
          type="range"
          aria-label="Zoom"
          min={0}
          max={100}
          defaultValue={53}
          className="h-[22px] w-full appearance-none bg-[linear-gradient(#605e5c,#605e5c)] bg-[length:100%_2px] bg-center bg-no-repeat [&::-webkit-slider-thumb]:h-[22px] [&::-webkit-slider-thumb]:w-[7px] [&::-webkit-slider-thumb]:appearance-none [&::-webkit-slider-thumb]:bg-[#605e5c]"
        />
        <span className="pointer-events-none absolute top-[6px] left-1/2 h-[10px] w-[2px] -translate-x-1/2 bg-[#605e5c]" />
      </div>
      <button aria-label="Zoom in" className="ml-[10px]">
        <Svg w={14} h={14} vb="0 0 14 14"><path d="M7 0V14M0 7H14" stroke="#605e5c" strokeWidth="3" /></Svg>
      </button>
      <span className="ml-[26px] pt-[2px] text-[20px] text-[#605e5c]">121%</span>
      <button aria-label="Fit to page" className="ml-[23px]">
        <Svg w={29} h={22} vb="0 0 29 22">
          <path d="M1 1H28V21H1Z" stroke="#605e5c" strokeWidth="2" />
          <path d="M5 9V5H10M19 5H24V9M24 13V17H19M10 17H5V13" stroke="#605e5c" strokeWidth="2" />
        </Svg>
      </button>
    </footer>
  );
}

export default function App() {
  return (
    <div className="flex h-screen w-full flex-col bg-[#b9bcc0] bg-[linear-gradient(#bdbaae_40px,#20262a_40px)] pt-[2px] pr-[2px] font-['Open_Sans',sans-serif]">
      <HostBar />
      <AppBar />
      <RibbonTabs />
      <Ribbon />
      <div className="flex min-h-0 flex-1">
        <Rail />
        <div className="relative flex min-w-0 flex-1 flex-col">
          <FormulaBar />
          <div className="flex min-h-0 flex-1">
            <Canvas />
            <Filters />
          </div>
          <PageTabs />
        </div>
        <Visualizations />
        <DataPane />
      </div>
      <StatusBar />
      <div className="h-[4px] shrink-0 border-t-2 border-black bg-[#b5b9c0]" />
    </div>
  );
}
